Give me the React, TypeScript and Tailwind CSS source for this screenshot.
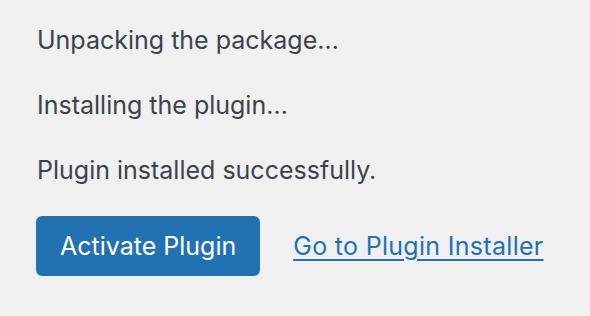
import React from 'react';

export default function App() {
  return (
    <div
      className="w-[590px] h-[316px] bg-[#f0f0f1] text-[#3c434a] px-[37px] pt-[8px] text-[25px] leading-[39px]"
      style={{ fontFamily: 'Inter, "Noto Sans", sans-serif' }}
    >
      <p className="my-[13px]">Unpacking the package…</p>
      <p className="my-[26px]">Installing the plugin…</p>
      <p className="my-[26px]">Plugin installed successfully.</p>
      <div className="flex items-center mt-[25px] -ml-px">
        <a
          href="#"
          className="inline-flex items-center h-[60px] px-[22px] rounded-[6px] bg-[#2271b1] border-2 border-[#2271b1] text-white"
        >
          Activate Plugin
        </a>
        <a
          href="#"
          className="ml-[33px] text-[#2271b1] tracking-[0.012em] underline underline-offset-[4px] decoration-2"
        >
          Go to Plugin Installer
        </a>
      </div>
    </div>
  );
}
